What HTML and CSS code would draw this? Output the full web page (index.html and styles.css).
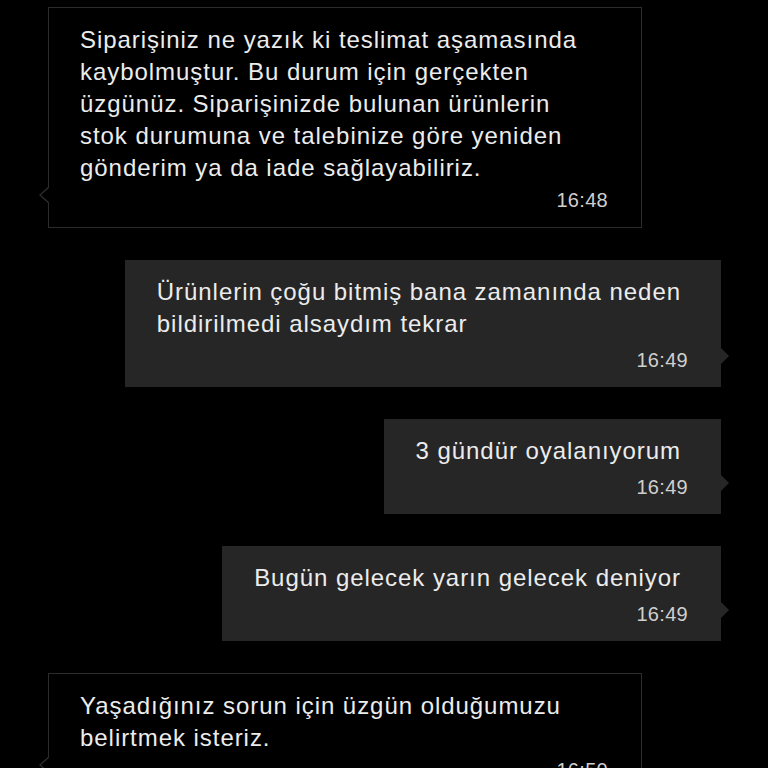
FILE: index.html
```html
<!DOCTYPE html>
<html>
<head>
<meta charset="utf-8">
<link rel="stylesheet" href="styles.css">
</head>
<body>
<div class="chat">
  <div class="msg in">
    <div class="text">Siparişiniz ne yazık ki teslimat aşamasında kaybolmuştur. Bu durum için gerçekten üzgünüz. Siparişinizde bulunan ürünlerin stok durumuna ve talebinize göre yeniden gönderim ya da iade sağlayabiliriz.</div>
    <div class="time">16:48</div>
  </div>
  <div class="msg out">
    <div class="text">Ürünlerin çoğu bitmiş bana zamanında neden<br>bildirilmedi alsaydım tekrar</div>
    <div class="time">16:49</div>
  </div>
  <div class="msg out">
    <div class="text">3 gündür oyalanıyorum</div>
    <div class="time">16:49</div>
  </div>
  <div class="msg out">
    <div class="text">Bugün gelecek yarın gelecek deniyor</div>
    <div class="time">16:49</div>
  </div>
  <div class="msg in">
    <div class="text">Yaşadığınız sorun için üzgün olduğumuzu belirtmek isteriz.</div>
    <div class="time">16:50</div>
  </div>
</div>
</body>
</html>
```

FILE: styles.css
```css
html, body {
  margin: 0;
  padding: 0;
  background: #000;
  height: 768px;
  overflow: hidden;
}
.chat {
  display: flex;
  flex-direction: column;
  gap: 32px;
  padding-top: 7px;
  font-family: "Liberation Sans", Arial, sans-serif;
  color: #ececec;
}
.msg {
  position: relative;
  box-sizing: border-box;
  padding: 16px 33px 11px 31px;
}
.msg.in {
  margin-left: 48px;
  width: 594px;
  background: #000;
  border: 1px solid #2c2c2c;
}
.msg.out {
  align-self: flex-end;
  margin-right: 47px;
  background: #262626;
  padding-left: 32px;
}
.text {
  font-size: 24px;
  letter-spacing: 0.95px;
  line-height: 32px;
}
.msg.in .text {
  padding-right: 16px;
}
.msg.out .text {
  padding-right: 7px;
  white-space: nowrap;
}
.time {
  text-align: right;
  font-size: 20px;
  letter-spacing: 0.3px;
  line-height: 32px;
  color: #cfcfcf;
}
.msg.out .time {
  margin-top: 4px;
}
.msg.in::before {
  content: "";
  position: absolute;
  left: -10px;
  bottom: 23px;
  border-style: solid;
  border-width: 9px 10px 9px 0;
  border-color: transparent #2c2c2c transparent transparent;
}
.msg.in::after {
  content: "";
  position: absolute;
  left: -8px;
  bottom: 24px;
  border-style: solid;
  border-width: 8px 9px 8px 0;
  border-color: transparent #000 transparent transparent;
}
.msg.out::after {
  content: "";
  position: absolute;
  right: -8px;
  bottom: 23px;
  border-style: solid;
  border-width: 8px 0 8px 8px;
  border-color: transparent transparent transparent #262626;
}
```
